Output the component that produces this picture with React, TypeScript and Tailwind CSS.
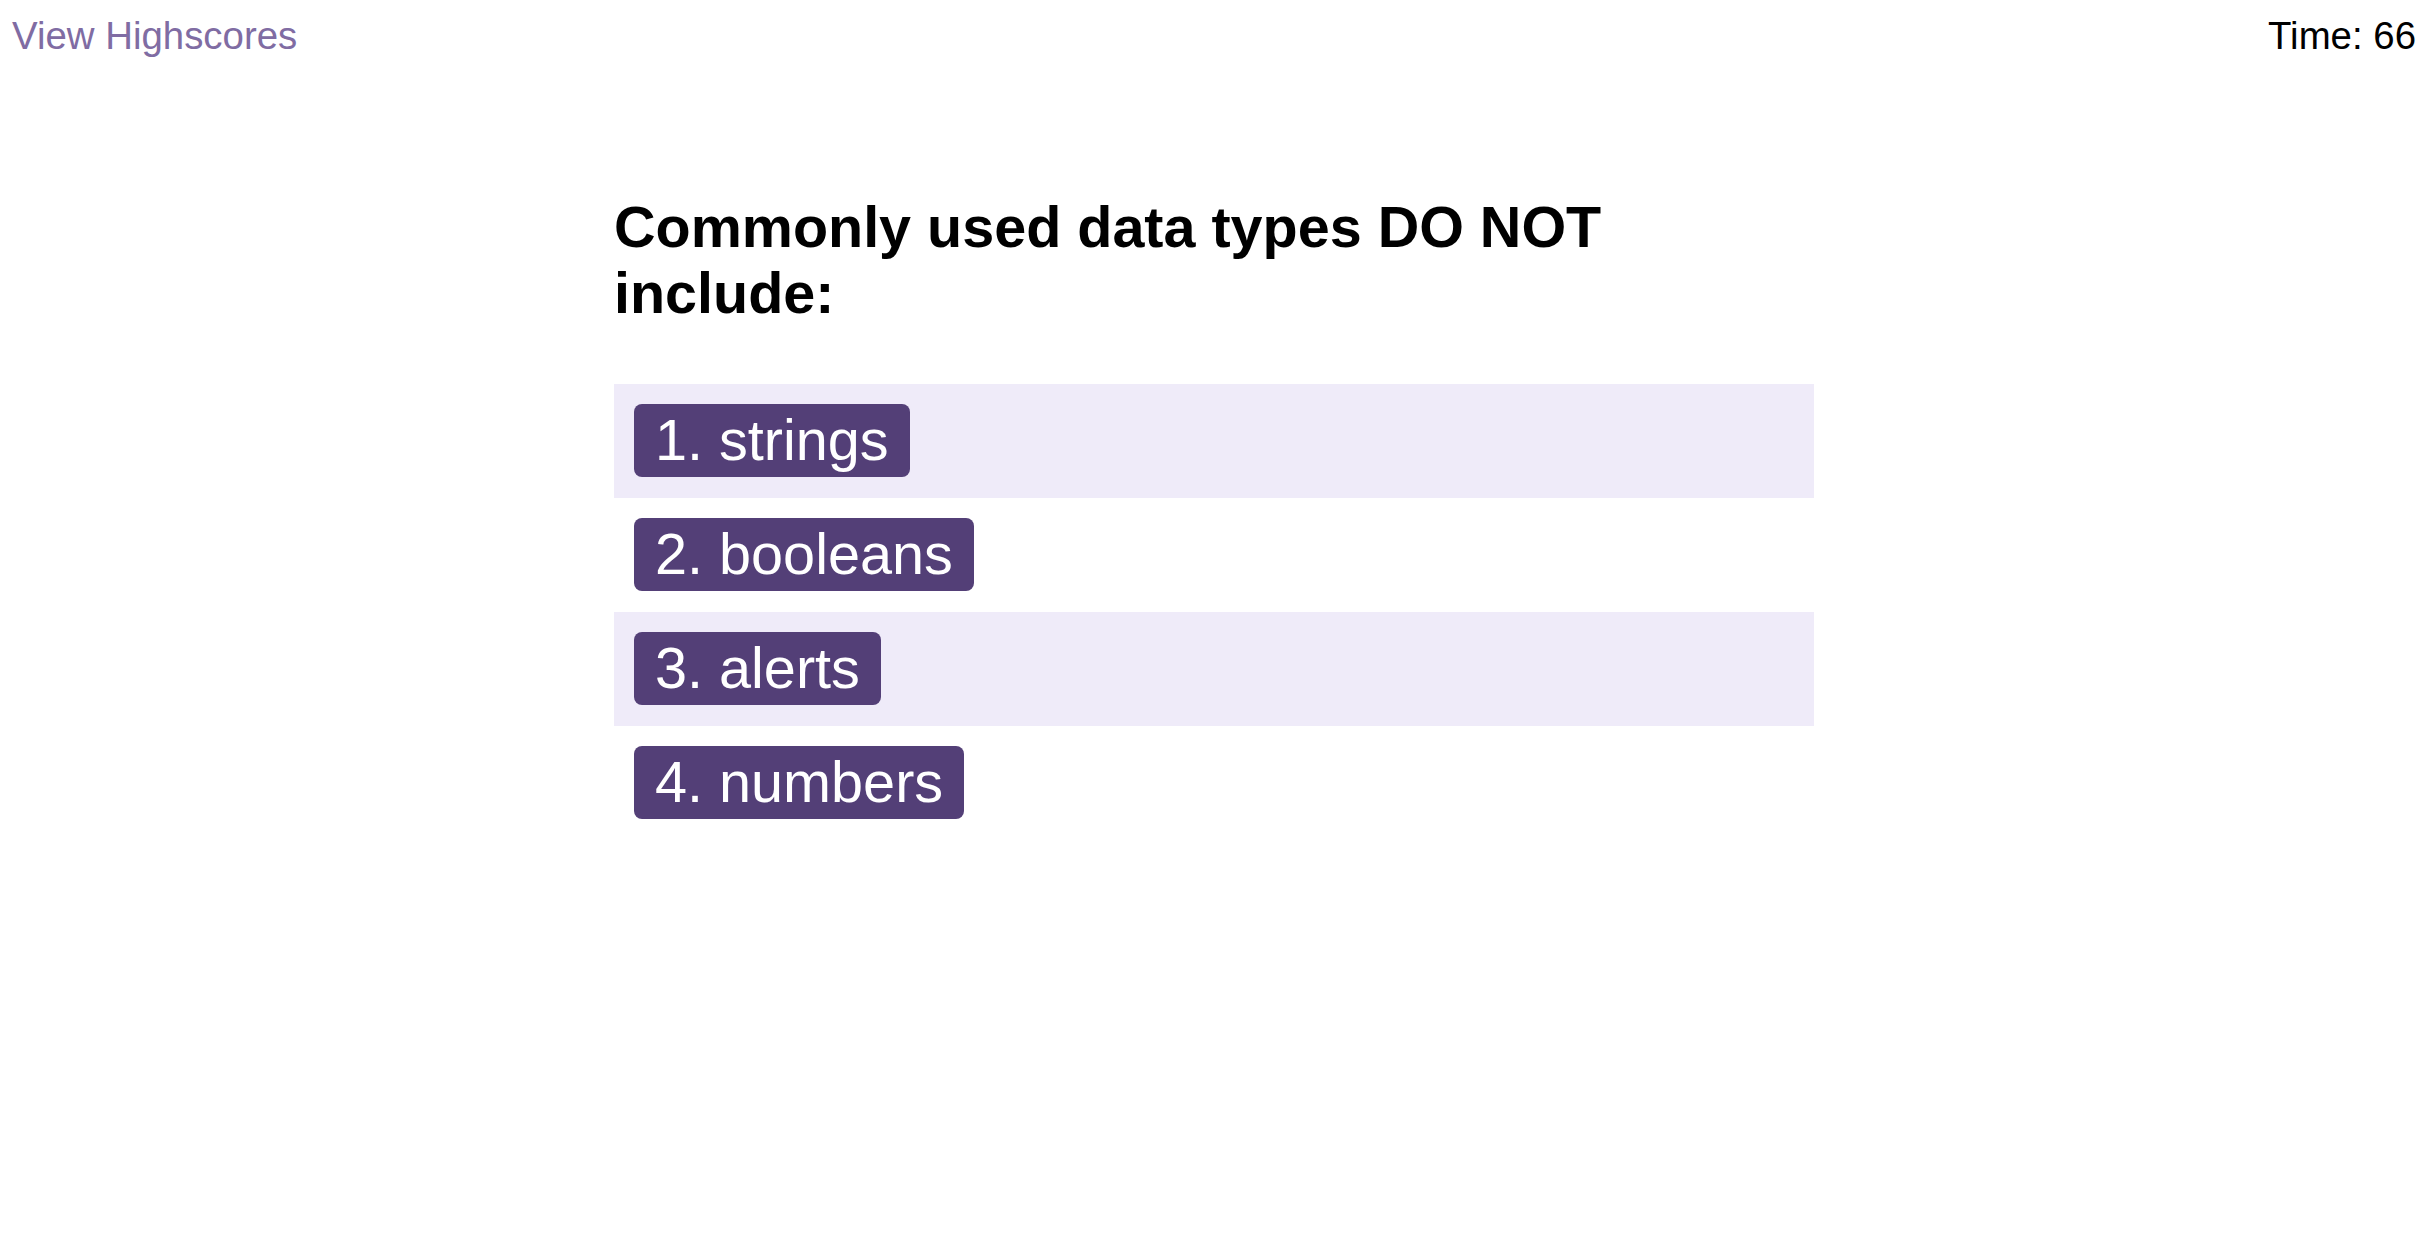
import React, { useState } from 'react';

const CHOICES = ['1. strings', '2. booleans', '3. alerts', '4. numbers'];

const App: React.FC = () => {
  const [time] = useState(66);

  return (
    <div className="min-h-screen bg-white text-black font-['Liberation_Sans',Arial,sans-serif]">
      <header className="flex justify-between items-start px-[12px] pt-[14px] text-[38.4px] leading-[44px]">
        <a href="#" className="text-[#806ca3] no-underline">View Highscores</a>
        <span>Time: {time}</span>
      </header>

      <main className="w-[1200px] mx-auto mt-[136px]">
        <h1 className="text-[57.5px] leading-[66px] font-bold w-[1200px] mb-[58px]">
          Commonly used data types DO NOT include:
        </h1>
        <ol className="list-none m-0 p-0">
          {CHOICES.map((c, i) => (
            <li
              key={c}
              className={`flex items-start pl-[20px] pt-[20px] pb-[21px] ${i % 2 === 0 ? 'bg-[#efebf9]' : 'bg-white'}`}
            >
              <button className="bg-[#533f77] text-white text-[57.6px] leading-[65px] px-[21px] py-[4px] rounded-[8px] whitespace-nowrap cursor-pointer">
                {c}
              </button>
            </li>
          ))}
        </ol>
      </main>
    </div>
  );
};

export default App;
